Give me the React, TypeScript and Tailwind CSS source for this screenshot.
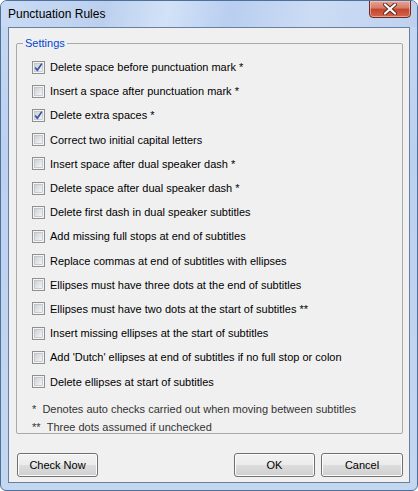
import React from 'react';

const rules: { label: string; checked: boolean }[] = [
  { label: 'Delete space before punctuation mark *', checked: true },
  { label: 'Insert a space after punctuation mark *', checked: false },
  { label: 'Delete extra spaces *', checked: true },
  { label: 'Correct two initial capital letters', checked: false },
  { label: 'Insert space after dual speaker dash *', checked: false },
  { label: 'Delete space after dual speaker dash *', checked: false },
  { label: 'Delete first dash in dual speaker subtitles', checked: false },
  { label: 'Add missing full stops at end of subtitles', checked: false },
  { label: 'Replace commas at end of subtitles with ellipses', checked: false },
  { label: 'Ellipses must have three dots at the end of subtitles', checked: false },
  { label: 'Ellipses must have two dots at the start of subtitles **', checked: false },
  { label: 'Insert missing ellipses at the start of subtitles', checked: false },
  { label: "Add 'Dutch' ellipses at end of subtitles if no full stop or colon", checked: false },
  { label: 'Delete ellipses at start of subtitles', checked: false },
];

function CheckBox({ checked }: { checked: boolean }) {
  return (
    <svg width="13" height="13" viewBox="0 0 13 13" className="shrink-0">
      <defs>
        <linearGradient id="cbfill" x1="0" y1="0" x2="1" y2="1">
          <stop offset="0" stopColor="#cbcfd5" />
          <stop offset="1" stopColor="#f7f7f7" />
        </linearGradient>
      </defs>
      <rect x="0.5" y="0.5" width="12" height="12" fill="#f4f4f4" stroke="#8e8f8f" />
      <rect x="2.5" y="2.5" width="8" height="8" fill="url(#cbfill)" stroke="#b0b4ba" strokeWidth="0.6" />
      {checked && (
        <path d="M3.2 6.6 L5.3 9.3 L9.8 2.6" fill="none" stroke="#3552a4" strokeWidth="1.7" strokeLinejoin="round" />
      )}
    </svg>
  );
}

function Button({ children, className }: { children: React.ReactNode; className?: string }) {
  return (
    <button
      className={
        'h-[24px] rounded-[3px] border border-[#707070] bg-[linear-gradient(#f2f2f2_0%,#ebebeb_50%,#dddddd_50%,#cfcfcf_100%)] text-[11px] text-black shadow-[inset_0_0_0_1px_#fcfcfc] ' +
        (className ?? '')
      }
    >
      {children}
    </button>
  );
}

export default function App() {
  return (
    <div
      className="w-[418px] h-[491px] rounded-t-[7px] rounded-b-[6px] border border-[#4f6f9c] bg-[linear-gradient(180deg,#c6d9f3_0%,#bcd1ef_30%,#c4d7f1_100%)] flex flex-col overflow-hidden"
      style={{ fontFamily: '"Liberation Sans", Arial, sans-serif' }}
    >
      {/* title bar */}
      <div className="h-[26px] shrink-0 flex items-start justify-between bg-[linear-gradient(100deg,#c9dbf4_0%,#bcd0ee_25%,#d2e2f7_40%,#b9cef0_55%,#ccdcf4_75%,#bdd1ef_100%)]">
        <span className="ml-[7px] mt-[5px] text-[12px] text-black leading-[16px]">Punctuation Rules</span>
        <div className="mr-[6px] w-[42px] h-[18px] -mt-px rounded-b-[4px] border border-[#6b2a22] bg-[linear-gradient(#e8a493_0%,#d47a66_45%,#c2452c_50%,#d4654a_100%)] flex items-center justify-center shadow-[inset_0_0_0_1px_rgba(255,220,210,0.5)]">
          <svg width="14" height="12" viewBox="0 0 14 12">
            <path d="M2 1.5 L12 10.5 M12 1.5 L2 10.5" stroke="#5a2a24" strokeWidth="4" strokeLinecap="round" />
            <path d="M2 1.5 L12 10.5 M12 1.5 L2 10.5" stroke="#ffffff" strokeWidth="2.2" strokeLinecap="round" />
          </svg>
        </div>
      </div>

      {/* client area */}
      <div className="ml-[7px] w-[402px] h-[456px] border border-[#6a7f9f] bg-[#f0f0f0] flex flex-col">
        <div className="relative ml-[7px] mt-[15px] w-[387px] h-[391px] border border-[#a9a9a9] rounded-[2px]">
          <span className="absolute -top-[8px] left-[6px] px-[2px] bg-[#f0f0f0] text-[11px] leading-[14px] text-[#0046d5]">
            Settings
          </span>
          <div className="pt-[11px] pl-[15px] flex flex-col">
            {rules.map((r) => (
              <div key={r.label} className="h-[24.2px] flex items-center gap-[5px]">
                <CheckBox checked={r.checked} />
                <span className="text-[11px] text-black leading-[14px]">{r.label}</span>
              </div>
            ))}
          </div>
          <div className="mt-[8px] pl-[15px] flex flex-col gap-[4px] text-[11px] leading-[14px] text-[#333333]">
            <div>* &nbsp;Denotes auto checks carried out when moving between subtitles</div>
            <div>** &nbsp;Three dots assumed if unchecked</div>
          </div>
        </div>

        <div className="mt-[19px] ml-[8px] flex items-center">
          <Button className="w-[81px]">Check Now</Button>
          <div className="flex-1" />
          <Button className="w-[81px]">OK</Button>
          <Button className="w-[82px] ml-[6px] mr-[6px]">Cancel</Button>
        </div>
      </div>
    </div>
  );
}
